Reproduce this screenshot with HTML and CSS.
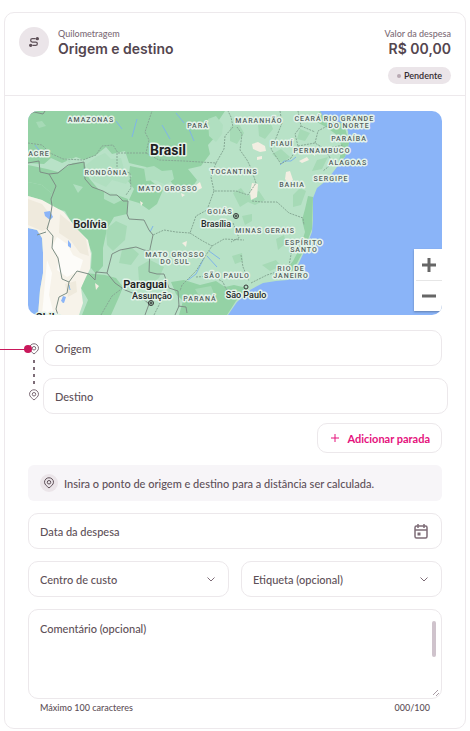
FILE: index.html
```
<!DOCTYPE html>
<html lang="pt-BR">
<head>
    <meta charset="UTF-8">
    <meta name="viewport" content="width=device-width, initial-scale=1.0">
    <title>Quilometragem - Origem e destino</title>
    <link rel="stylesheet" href="styles.css">
</head>
<body>

<!-- Shared icons -->
<svg class="sprite" aria-hidden="true">
    <symbol id="pin" viewBox="0 0 24 24">
        <path d="M12 22C9 19 3 15.500 3 10.500a9 9 0 0 1 18 0C21 15.500 15 19 12 22z"/>
        <circle cx="12" cy="10.500" r="3.500"/>
    </symbol>
    <symbol id="chevron" viewBox="0 0 12 12">
        <path d="M2.500 4.500 6 8l3.500-3.500"/>
    </symbol>
</svg>

<main class="card">
    <header class="card-header">
        <div class="header-icon">
            <svg viewBox="0 0 24 24" class="icon">
                <circle cx="20" cy="4" r="2.500" fill="currentColor"/>
                <circle cx="4" cy="20" r="2.500" fill="currentColor"/>
                <path d="M16 4H8a4 4 0 0 0 0 8h8a4 4 0 0 1 0 8H8"/>
            </svg>
        </div>
        <div class="header-info">
            <span class="caption">Quilometragem</span>
            <h1 class="title">Origem e destino</h1>
        </div>
        <div class="header-value">
            <span class="caption">Valor da despesa</span>
            <strong class="title">R$ 00,00</strong>
            <span class="badge">Pendente</span>
        </div>
    </header>

    <form class="content">
        <div class="map">
            <svg class="map-drawing" viewBox="28 111 414 204" role="img" aria-label="Mapa do Brasil">
                <rect class="sea" x="28" y="111" width="414" height="204"/>
                <path class="land" d="M28 111H320L323 117 331 120 344 124 348 131 349 143 345 157 337 167 327 180 317 188 313 198 313 220 312 232 305 250 298 265 288 280 276 281 263 283 250 290 237 302 228 315H38L40 290 43 273 43 253 42 238 37 230 28 228z"/>

                <!-- Forest -->
                <g class="forest">
                    <path d="M28 111H225L217 123 211 129 215 137 208 145 210 154 201 166 188 169 197 180 190 191 176 188 168 178 153 175 146 167 129 163 125 151 112 154 106 147 96 155 84 160 76 157 62 163 51 158 44 164 28 163z"/>
                    <path d="M28 165 47 169 58 172 73 163 84 162 89 178 99 190 117 195 128 199 127 214 114 217 107 229 103 248 103 266 96 274 91 268 92 253 87 240 75 229 65 211 54 208 51 193 42 185 28 182z"/>
                    <path d="M28 182 42 185 51 193 54 208 42 200 28 196z"/>
                    <path d="M130 166 145 169 151 181 163 190 157 204 149 210 139 203 129 200 134 189 128 181z"/>
                    <path d="M85 273 105 275 116 278 123 287 119 297 111 315H82L88 300 81 288z"/>
                    <path d="M171 282 184 280 200 285 216 281 225 287 234 285 247 288 236 301 227 315H179L183 301 176 294z"/>
                    <path d="M308 196 313 197 312 229 304 250 297 263 290 275 284 272 293 261 300 248 305 232 302 220 305 209z"/>
                    <path d="M320 111 323 117 344 124 349 143 345 157 339 161 342 147 337 135 326 127 315 121z"/>
                </g>

                <!-- Scattered woods and fields -->
                <g class="field">
                    <path d="M258 124 269 119 273 129 265 139 259 136zM230 127 239 124 244 133 237 144 230 141zM272 154 281 149 290 157 282 163z"/>
                    <path d="M233 193 241 188 247 196 259 191 265 200 255 205 248 202 240 207zM293 195 300 188 306 191 301 205 293 207z"/>
                    <path d="M138 267 150 260 164 267 159 278 149 285 139 281z"/>
                    <path d="M232 256 242 253 243 261 235 264zM276 239 284 235 286 243 278 250zM262 265 276 260 281 266 270 271zM242 216 252 214 252 221 245 225z"/>
                    <path d="M106 229 116 221 127 226 125 240 113 251 107 245zM195 289 211 286 215 296 201 299zM36 122 42 121 46 126 39 128z"/>
                    <path d="M122 250 131 247 139 254 131 265 119 263zM300 129 310 133 305 141 297 139zM317 160 328 157 322 169 312 171z"/>
                </g>
                <g class="cleared">
                    <path d="M86 165 96 157 105 153 111 159 121 158 124 169 132 176 126 184 112 180 106 187 93 181z"/>
                    <path d="M144 168 154 166 162 171 172 170 174 179 166 185 155 180 146 181z"/>
                    <path d="M208 119 216 116 223 125 222 134 216 142 209 136z"/>
                    <path d="M104 191 115 194 122 200 114 204 104 199zM73 184 83 187 78 193zM65 159 71 158 70 163z"/>
                </g>

                <!-- Andes and dry land -->
                <path class="desert" d="M28 196 42 200 53 206 64 212 76 228 88 240 91 254 90 269 86 277 81 288 83 303 79 315H38L40 290 43 273 43 253 42 238 37 230 28 228z"/>
                <path class="salt" d="M57 237 67 244 73 255 83 260 80 270 67 277 57 270 59 257 52 247zM47 260 52 273 49 295 54 315H42L44 293z"/>
                <path class="rock" d="M28 199 42 204 49 213 49 228 42 231 28 225zM60 214 71 223 86 239 89 256 80 253 71 241 59 233zM65 284 76 281 77 292 68 297z"/>
                <g class="sand">
                    <path d="M252 144 258 142 265 146 266 151 260 152 253 149z"/>
                    <path d="M257 157 262 156 262 159 257 160zM299 161 307 157 309 160 302 163zM310 152 315 152 315 156z"/>
                    <path d="M286 172 290 171 293 180 289 184 285 179z"/>
                    <path d="M252 183 258 184 257 197 251 200 250 193z"/>
                    <path d="M196 185 200 182 202 188 196 191zM140 201 143 203 141 206zM181 193 185 195 182 197zM182 243 187 241 186 247zM95 283 99 286 96 290z"/>
                </g>

                <!-- Rivers and lakes -->
                <g class="river">
                    <path d="M137 119 132 137M162 125 170 139M176 113 184 123M189 129 194 141M116 121 122 129M35 145 41 153M91 117 98 120"/>
                    <path d="M296 157 291 161 284 161 280 165M204 258 200 266 196 274 188 280M209 251 220 259M207 256 217 267"/>
                    <path d="M150 232 153 226M64 297 63 303M70 290 69 285"/>
                </g>
                <g class="sea">
                    <path d="M44 212 50 211 53 217 50 220 45 216zM68 240 71 244 71 248 68 246z"/>
                    <path d="M63 296 66 297 64 303 61 301z"/>
                </g>

                <!-- Country borders -->
                <g class="border">
                    <path d="M28 115 34 112 43 114 45 111M28 163 39 161 40 172 49 174 58 173 68 165 84 162 85 179 92 187 103 191 110 195 117 195 123 201 128 201 127 214 129 219 144 220 149 230 153 235 150 249 149 272 157 274 164 274 169 288 178 291 179 306 175 315"/>
                    <path d="M49 174 56 186 51 199 52 206 50 219 47 229 53 236 52 248 58 258 62 279 69 282 77 271 89 274 95 280 96 272 107 273 112 254 120 250 136 247 144 250 149 251"/>
                    <path d="M107 273 115 283 125 290 140 296 149 304 145 315M69 282 67 293 59 297 56 309 58 315M37 235 46 232"/>
                    <path d="M178 306 186 307 187 313"/>
                </g>

                <!-- State borders -->
                <g class="state">
                    <path d="M28 143 42 145 50 153 63 159 83 160 96 155 102 146 113 145 118 153 146 153 149 140 145 132 152 111"/>
                    <path d="M117 153 117 169 130 173 131 188 126 195M146 153 159 160 184 161 216 163 224 149 225 136 233 127 231 117 228 111"/>
                    <path d="M216 163 211 177 214 191 236 191 248 195 256 183 251 168 247 160 240 150 242 134 237 127"/>
                    <path d="M214 191 207 210 196 216 190 233 176 232 164 230 153 235"/>
                    <path d="M190 233 201 240 212 246 206 255 196 271 182 285 180 291M212 246 224 239 244 240M196 277 213 276 223 282 226 289 237 295"/>
                    <path d="M280 111 282 123 276 138 271 149 281 164 291 158 298 146 295 134 301 126 298 111M252 201 262 202 277 202 289 213 303 218 304 225"/>
                    <path d="M233 223 239 238 231 242M298 146 315 143 325 149 343 145M315 143 318 131 327 126M326 151 333 163 323 171M301 126 315 132"/>
                    <path d="M251 283 267 275 289 268M289 266 292 249 305 245M241 255 243 267 249 281M101 315 112 296 124 287M154 315 160 303"/>
                </g>

                <g class="state-name">
                    <text x="91" y="122">AMAZONAS</text>
                    <text x="198" y="128">PARÁ</text>
                    <text x="259" y="123">MARANHÃO</text>
                    <text x="308" y="121">CEARÁ</text>
                    <text x="349" y="121">RIO GRANDE</text>
                    <text x="349" y="128">DO NORTE</text>
                    <text x="349" y="141">PARAÍBA</text>
                    <text x="282" y="146">PIAUÍ</text>
                    <text x="322" y="153">PERNAMBUCO</text>
                    <text x="348" y="165">ALAGOAS</text>
                    <text x="331" y="181">SERGIPE</text>
                    <text x="292" y="187">BAHIA</text>
                    <text x="39" y="156">ACRE</text>
                    <text x="106" y="175">RONDÔNIA</text>
                    <text x="234" y="174">TOCANTINS</text>
                    <text x="168" y="191">MATO GROSSO</text>
                    <text x="220" y="214">GOIÁS</text>
                    <text x="265" y="233">MINAS GERAIS</text>
                    <text x="304" y="245">ESPÍRITO</text>
                    <text x="304" y="252">SANTO</text>
                    <text x="175" y="257">MATO GROSSO</text>
                    <text x="175" y="264">DO SUL</text>
                    <text x="227" y="278">SÃO PAULO</text>
                    <text x="291" y="271">RIO DE</text>
                    <text x="291" y="278">JANEIRO</text>
                    <text x="200" y="301">PARANÁ</text>
                </g>
                <g class="city-name">
                    <text x="216" y="227">Brasília</text>
                    <text x="152" y="299">Assunção</text>
                    <text x="246" y="298">São Paulo</text>
                </g>
                <g class="country-name">
                    <text x="90" y="228">Bolívia</text>
                    <text x="145" y="288">Paraguai</text>
                    <text x="48" y="321">Chile</text>
                    <text x="168" y="155" class="country-main">Brasil</text>
                </g>
                <g class="capital">
                    <circle cx="236" cy="216" r="2.500"/>
                    <circle cx="236" cy="216" r="1"/>
                    <circle cx="151" cy="303" r="2.500"/>
                    <circle cx="151" cy="303" r="1"/>
                    <circle cx="246" cy="287" r="2"/>
                </g>
            </svg>
            <div class="map-zoom">
                <button type="button" aria-label="Aumentar zoom">
                    <svg viewBox="0 0 16 16"><path d="M8 1v14M1 8h14"/></svg>
                </button>
                <button type="button" aria-label="Diminuir zoom">
                    <svg viewBox="0 0 16 16"><path d="M1 8h14"/></svg>
                </button>
            </div>
        </div>

        <div class="stops">
            <div class="stops-rail">
                <svg class="icon pin"><use href="#pin"/></svg>
                <svg class="rail-line" viewBox="0 0 2 24"><path d="M1 0v24"/></svg>
                <svg class="icon pin"><use href="#pin"/></svg>
                <span class="pointer"></span>
            </div>
            <div class="stops-fields">
                <input class="field-box" type="text" placeholder="Origem" aria-label="Origem">
                <input class="field-box field-wide" type="text" placeholder="Destino" aria-label="Destino">
            </div>
        </div>

        <button type="button" class="add-button">
            <svg viewBox="0 0 10 10"><path d="M5 1v8M1 5h8"/></svg>
            Adicionar parada
        </button>

        <p class="notice">
            <span class="notice-icon"><svg class="icon"><use href="#pin"/></svg></span>
            Insira o ponto de origem e destino para a distância ser calculada.
        </p>

        <div class="control">
            <input class="field-box" type="text" placeholder="Data da despesa" aria-label="Data da despesa">
            <button type="button" class="calendar" aria-label="Abrir calendário">
                <svg viewBox="0 0 16 16">
                    <rect x="2" y="3" width="12" height="12" rx="1.500"/>
                    <path d="M2 7h12M5 1v4M11 1v4"/>
                    <rect x="5" y="10" width="2" height="2" fill="currentColor" stroke-width="1"/>
                </svg>
            </button>
        </div>

        <div class="row">
            <div class="control">
                <select class="field-box" aria-label="Centro de custo">
                    <option>Centro de custo</option>
                </select>
                <svg class="chevron"><use href="#chevron"/></svg>
            </div>
            <div class="control">
                <select class="field-box" aria-label="Etiqueta (opcional)">
                    <option>Etiqueta (opcional)</option>
                </select>
                <svg class="chevron"><use href="#chevron"/></svg>
            </div>
        </div>

        <div class="comment">
            <textarea class="field-box" placeholder="Comentário (opcional)" aria-label="Comentário (opcional)" maxlength="100"></textarea>
            <span class="scroll-thumb"></span>
            <svg class="resize-mark" viewBox="0 0 8 8"><path d="M1 6 6 1M4 7 7 4"/></svg>
        </div>
        <div class="comment-foot">
            <span>Máximo 100 caracteres</span>
            <span>000/100</span>
        </div>
    </form>
</main>

</body>
</html>
```
FILE: styles.css
```
* {
    box-sizing: border-box;
}

body {
    margin: 0;
    padding: 12px 4px 2px;
    background: #fff;
    font-family: Lato, sans-serif;
    font-size: 11px;
    font-weight: 500;
    color: #5e5058;
}

button, input, select, textarea {
    font: inherit;
    color: inherit;
}

svg {
    display: block;
    fill: none;
    stroke: currentColor;
}

.sprite {
    position: absolute;
    width: 0;
    height: 0;
}

.icon {
    width: 12px;
    height: 12px;
    stroke-width: 2;
}

.card {
    border: 1px solid #ede9ec;
    border-radius: 10px;
}

.card-header {
    display: flex;
    gap: 9px;
    padding: 14px;
    padding-bottom: 11px;
    border-bottom: 1px solid #ede9ec;
}

.header-icon {
    display: flex;
    align-items: center;
    justify-content: center;
    width: 30px;
    height: 30px;
    border-radius: 50%;
    background: #ebe5e9;
}

.header-icon .icon {
    width: 10px;
    height: 10px;
    stroke-width: 3;
}

.header-info,
.header-value {
    display: flex;
    flex-direction: column;
}

.header-value {
    margin-left: auto;
    align-items: flex-end;
}

.caption {
    font-size: 9px;
    line-height: 13px;
    color: #7d6c77;
}

.title {
    margin: 0;
    font-family: Inter, sans-serif;
    font-size: 14px;
    font-weight: 600;
    line-height: 18px;
    color: #54464f;
}

.badge {
    display: flex;
    align-items: center;
    gap: 3px;
    height: 17px;
    margin-top: 9px;
    padding: 0 9px;
    border-radius: 9px;
    background: #ebe5e9;
    font-size: 9px;
    font-weight: 600;
    color: #342b30;
}

.badge::before {
    content: "";
    width: 4px;
    height: 4px;
    border-radius: 50%;
    background: #b9a9b3;
}

.content {
    display: flex;
    flex-direction: column;
    gap: 12px;
    padding: 15px 23px 13px;
}

/* Map */
.map {
    position: relative;
    margin-bottom: 3px;
    border-radius: 10px;
    overflow: hidden;
}

.map-drawing {
    width: 100%;
    stroke: none;
    font-family: Roboto, sans-serif;
}

.sea { fill: #8ab4f8; }
.land { fill: #b8e2c7; }
.forest { fill: #94d2a5; }
.field { fill: #a6dab6; }
.cleared { fill: #b0dfc0; }
.desert { fill: #f7f3ea; }
.salt { fill: #fdfcf9; }
.rock { fill: #efeadd; }
.sand { fill: #f3eee2; }

.river {
    fill: none;
    stroke: #7fb4e8;
}

.border {
    fill: none;
    stroke: #7d8e85;
}

.state {
    fill: none;
    stroke: #86a894;
    stroke-dasharray: 2 1;
}

.state-name,
.city-name,
.country-name {
    text-anchor: middle;
    paint-order: stroke;
    stroke: #e4f3e9;
    stroke-width: 3px;
    stroke-linejoin: round;
}

.state-name {
    font-size: 7px;
    font-weight: 500;
    letter-spacing: 1px;
    fill: #53605d;
}

.city-name {
    font-size: 9px;
    font-weight: 500;
    fill: #24292a;
}

.country-name {
    font-size: 11px;
    font-weight: 600;
    fill: #1d2122;
}

.country-main {
    font-size: 14px;
    font-weight: 700;
}

.capital {
    fill: none;
    stroke: #333;
}

.map-zoom {
    position: absolute;
    right: 0;
    bottom: 4px;
    width: 28px;
    padding-left: 2px;
    background: #fff;
    box-shadow: 0 1px 2px rgba(0, 0, 0, 0.3);
}

.map-zoom button {
    display: flex;
    align-items: center;
    justify-content: center;
    width: 100%;
    height: 31px;
    padding: 0;
    border: none;
    background: none;
    color: #666;
    cursor: pointer;
}

.map-zoom button + button {
    border-top: 1px solid #e6e6e6;
}

.map-zoom svg {
    width: 16px;
    height: 16px;
    stroke-width: 3;
}

/* Fields */
.field-box {
    display: block;
    width: 100%;
    height: 36px;
    padding: 0 11px;
    border: 1px solid #ece8eb;
    border-radius: 10px;
    background: #fff;
    outline: none;
    appearance: none;
}

.field-box::placeholder {
    color: #5e5058;
    opacity: 1;
}

.field-box:focus {
    border-color: #c9bcc4;
}

.stops {
    display: flex;
    gap: 3px;
}

.stops-rail {
    position: relative;
    display: flex;
    flex-direction: column;
    align-items: center;
    gap: 5px;
    padding-top: 13px;
    color: #7d6c77;
}

.rail-line {
    width: 2px;
    height: 24px;
    stroke-width: 2;
    stroke-dasharray: 3 4;
}

/* Line that comes in from the edge of the page */
.pointer {
    position: absolute;
    top: 19px;
    left: -28px;
    width: 28px;
    height: 1px;
    background: #c9185b;
}

.pointer::after {
    content: "";
    position: absolute;
    top: -4px;
    right: -4px;
    width: 8px;
    height: 8px;
    border-radius: 50%;
    background: #c9185b;
}

.stops-fields {
    flex: 1;
    display: flex;
    flex-direction: column;
    gap: 12px;
}

.field-wide {
    width: calc(100% + 6px);
}

.add-button {
    display: flex;
    align-items: center;
    align-self: flex-end;
    gap: 7px;
    height: 30px;
    margin-top: -3px;
    padding: 0 11px 0 12px;
    border: 1px solid #ece8eb;
    border-radius: 10px;
    background: #fff;
    font-weight: 700;
    color: #e5127d;
    cursor: pointer;
}

.add-button svg {
    width: 10px;
    height: 10px;
}

.notice {
    display: flex;
    align-items: center;
    gap: 6px;
    min-height: 36px;
    margin: 0;
    padding: 0 12px;
    border-radius: 6px;
    background: #f7f5f8;
}

.notice-icon {
    display: flex;
    align-items: center;
    justify-content: center;
    width: 18px;
    height: 18px;
    border-radius: 50%;
    background: #ebe5e9;
}

.control {
    position: relative;
    flex: 1;
}

.calendar {
    position: absolute;
    top: 10px;
    right: 13px;
    padding: 0;
    border: none;
    background: none;
    color: #7d6c77;
    cursor: pointer;
}

.calendar svg {
    width: 16px;
    height: 16px;
    stroke-width: 1.500;
}

.row {
    display: flex;
    gap: 12px;
}

.chevron {
    position: absolute;
    top: 12px;
    right: 12px;
    width: 12px;
    height: 12px;
    color: #7d6c77;
    pointer-events: none;
}

.comment {
    position: relative;
}

.comment .field-box {
    height: 90px;
    padding: 11px;
    line-height: 16px;
    resize: none;
}

.scroll-thumb {
    position: absolute;
    top: 12px;
    right: 6px;
    width: 4px;
    height: 36px;
    border-radius: 2px;
    background: #cfc3cc;
}

.resize-mark {
    position: absolute;
    right: 2px;
    bottom: 2px;
    width: 8px;
    height: 8px;
    color: #a99ca5;
}

.comment-foot {
    display: flex;
    justify-content: space-between;
    margin-top: -10px;
    padding: 0 12px;
    font-size: 9px;
    line-height: 14px;
}
```
